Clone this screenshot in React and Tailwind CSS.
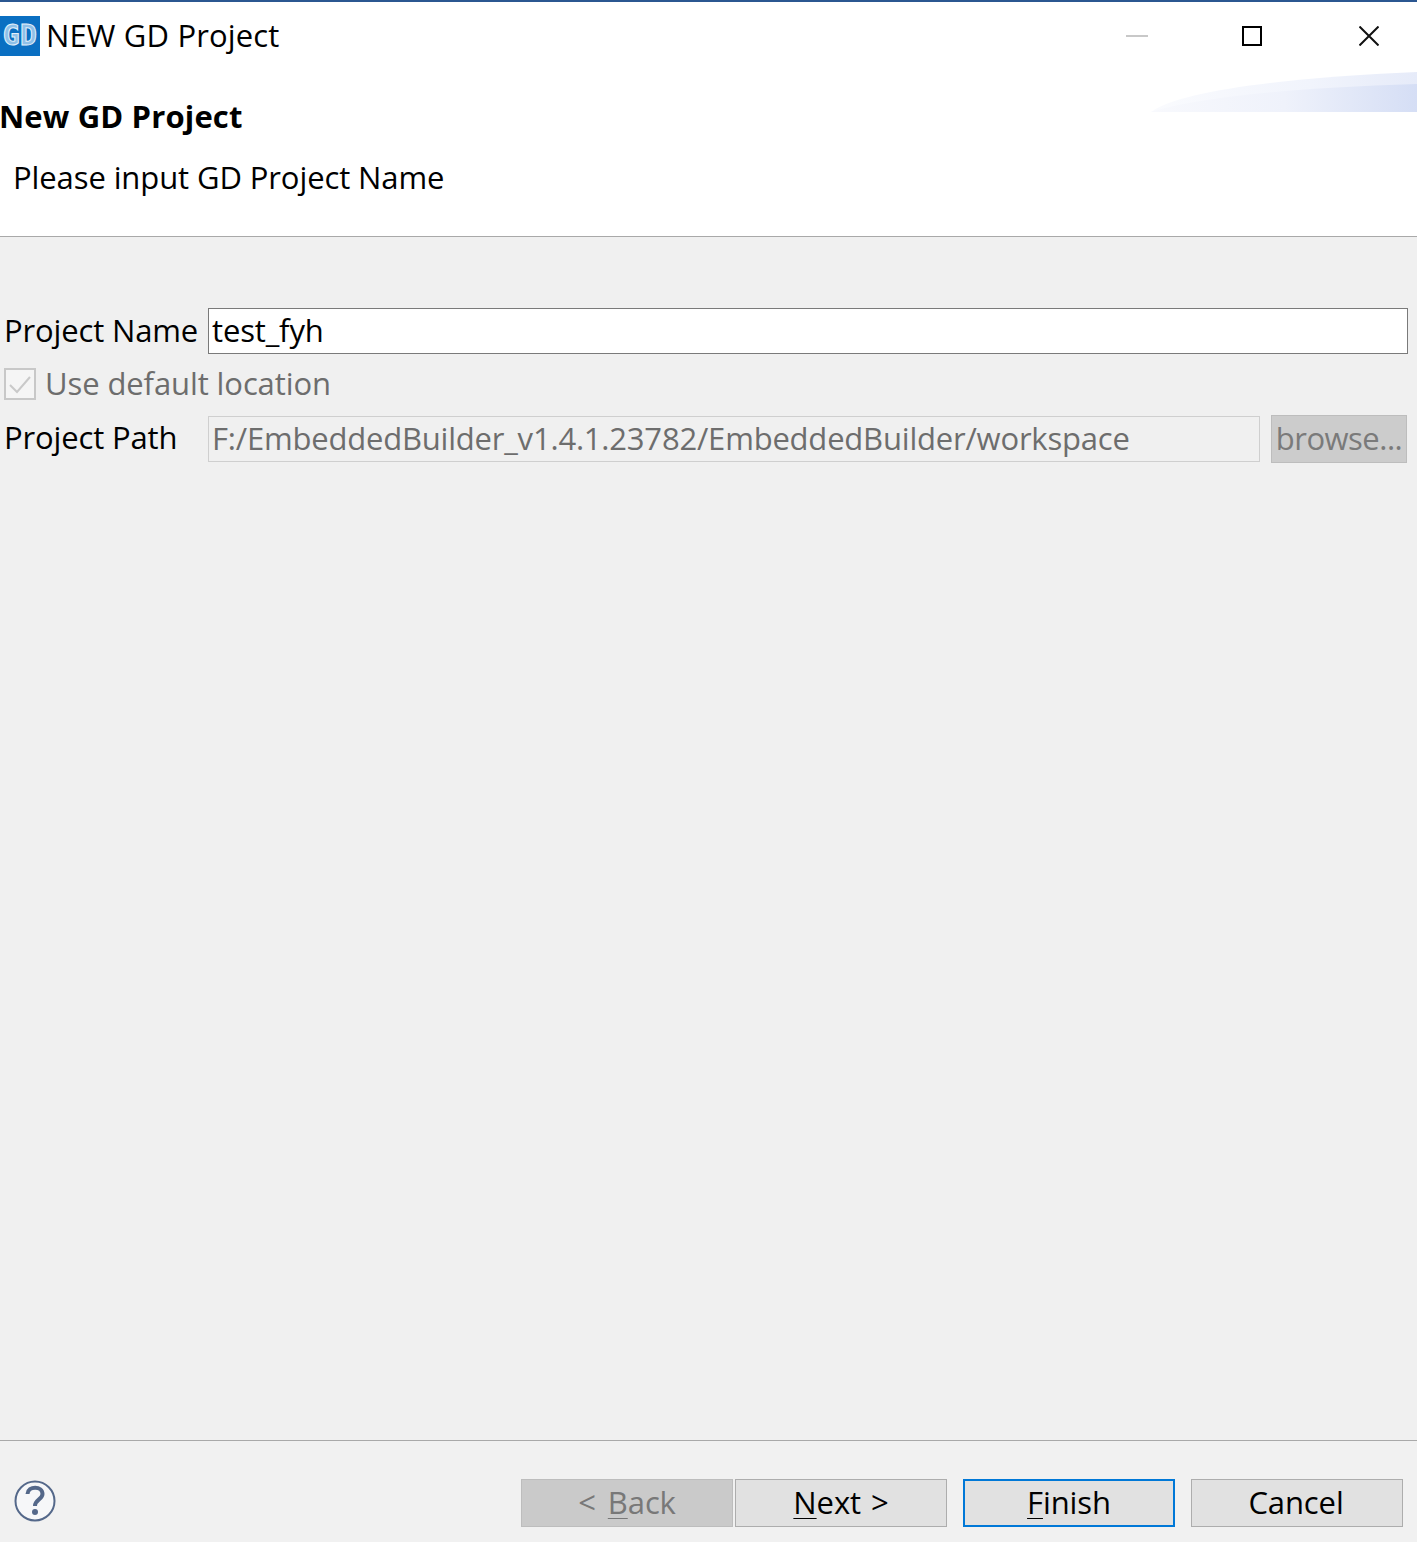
import React from "react";

function Btn({ children, cls = "" }) {
  return (
    <div className={`w-[212px] h-[48px] flex items-center justify-center border text-[31px] leading-none pb-[2px] tracking-[-0.1px] ${cls}`}>
      {children}
    </div>
  );
}

export default function App() {
  return (
    <div className="w-[1417px] h-[1542px] flex flex-col bg-[#f0f0f0] text-black overflow-hidden font-['Open_Sans','Noto_Sans',sans-serif]">
      <div className="h-[237px] shrink-0 bg-white border-b border-[#a9a9a9] flex flex-col relative">
        <div className="h-[2px] bg-[#2b5791] shrink-0" />
        <div className="h-[70px] shrink-0 flex items-start pt-[14px]">
          <div className="w-[40px] h-[40px] bg-[#0a6fc2] flex items-center justify-center overflow-hidden">
            <span className="text-[#8fc0e8] font-bold text-[28px] leading-none tracking-[0.5px] font-['DejaVu_Sans_Mono',monospace] [-webkit-text-stroke:1px_#e4f0fa]">GD</span>
          </div>
          <span className="ml-[6px] text-[31px] leading-[38px] tracking-[0.15px] whitespace-nowrap">NEW GD Project</span>
          <div className="ml-auto flex items-center h-[40px]">
            <svg width="22" height="2" className="mr-[94px]"><rect width="22" height="2" fill="#c8c8c8" /></svg>
            <svg width="20" height="20" className="mr-[97px]"><rect x="1" y="1" width="18" height="18" fill="none" stroke="#000" strokeWidth="2" /></svg>
            <svg width="20" height="20" className="mr-[38px]"><path d="M0.5 0.5L19.5 19.5M19.5 0.5L0.5 19.5" stroke="#111" strokeWidth="2" /></svg>
          </div>
        </div>
        <svg width="269" height="40" className="absolute right-0 top-[72px]">
          <defs>
            <linearGradient id="g" x1="0" x2="1" y1="0" y2="0">
              <stop offset="0" stopColor="#fafbfe" />
              <stop offset="0.6" stopColor="#f1f4fc" />
              <stop offset="1" stopColor="#e6ebf9" />
            </linearGradient>
            <linearGradient id="h" x1="0" x2="1" y1="0" y2="0">
              <stop offset="0" stopColor="#f8f9fd" />
              <stop offset="0.5" stopColor="#eff2fb" />
              <stop offset="1" stopColor="#d5def5" />
            </linearGradient>
          </defs>
          <path d="M3 40C30 20 130 6 269 0V40Z" fill="url(#g)" />
          <path d="M3 40C40 28 130 16 269 12V40Z" fill="url(#h)" />
        </svg>
        <div className="text-[31px] font-bold leading-[44px] mt-[22px] -ml-[1px] tracking-[0.15px] whitespace-nowrap">New GD Project</div>
        <div className="text-[31px] leading-[42px] ml-[13px] mt-[18px] tracking-[-0.1px] whitespace-nowrap">Please input GD Project Name</div>
      </div>

      <div className="flex-1 flex flex-col pt-[71px] text-[31px] tracking-[-0.15px]">
        <div className="flex items-center h-[46px]">
          <span className="w-[208px] pl-[4px] pb-[2px] shrink-0 whitespace-nowrap">Project Name</span>
          <div className="w-[1200px] h-[46px] bg-white border border-[#7a7a7a] pl-[3px] pb-[2px] flex items-center">test_fyh</div>
        </div>
        <div className="flex items-center h-[32px] mt-[14px] pl-[4px]">
          <div className="w-[32px] h-[32px] border-2 border-[#c8c8c8] bg-[#f5f5f5] flex items-center justify-center">
            <svg width="24" height="20" viewBox="0 0 24 20"><path d="M2 11L9 18L22 3" fill="none" stroke="#c9c9c9" strokeWidth="2" /></svg>
          </div>
          <span className="ml-[9px] pb-[2px] text-[#6d6d6d] tracking-[-0.1px]">Use default location</span>
        </div>
        <div className="flex items-center h-[48px] mt-[15px]">
          <span className="w-[208px] pl-[4px] pb-[4px] shrink-0 whitespace-nowrap">Project Path</span>
          <div className="w-[1052px] h-[46px] bg-[#f0f0f0] border border-[#cfcfcf] pl-[3px] pb-[2px] flex items-center text-[#6d6d6d] whitespace-nowrap tracking-[-0.2px]">F:/EmbeddedBuilder_v1.4.1.23782/EmbeddedBuilder/workspace</div>
          <div className="ml-[11px] w-[136px] h-[48px] bg-[#cccccc] border border-[#bdbdbd] pb-[2px] flex items-center justify-center text-[#7a7a7a] tracking-[-0.5px]">browse...</div>
        </div>
      </div>

      <div className="h-[102px] shrink-0 border-t border-[#a9a9a9] bg-[#f1f1f1] flex items-start pt-[38px]">
        <svg width="42" height="42" viewBox="0 0 42 42" className="ml-[14px] mt-[1px]">
          <circle cx="21" cy="21" r="19.5" fill="#f6f7f9" stroke="#54688a" strokeWidth="2" />
          <path d="M13.5 14C14 5.5 28.5 5.5 28.5 14C28.5 19.5 21 19.5 21 26" fill="none" stroke="#54688a" strokeWidth="4" />
          <circle cx="21" cy="32" r="3" fill="#54688a" />
        </svg>
        <div className="ml-auto flex mr-[14px]">
          <Btn cls="bg-[#cacaca] border-[#bdbdbd] text-[#787878]">&lt;<span className="underline ml-[12px] decoration-1 underline-offset-4">B</span>ack</Btn>
          <Btn cls="ml-[2px] bg-[#e1e1e1] border-[#adadad]"><span className="underline decoration-1 underline-offset-4">N</span><span>ext</span><span className="ml-[10px]">&gt;</span></Btn>
          <Btn cls="ml-[16px] bg-[#e1e1e1] !border-2 border-[#0078d7]"><span className="underline decoration-1 underline-offset-4">F</span>inish</Btn>
          <Btn cls="ml-[16px] bg-[#e1e1e1] border-[#adadad] pr-[2px]">Cancel</Btn>
        </div>
      </div>
    </div>
  );
}
